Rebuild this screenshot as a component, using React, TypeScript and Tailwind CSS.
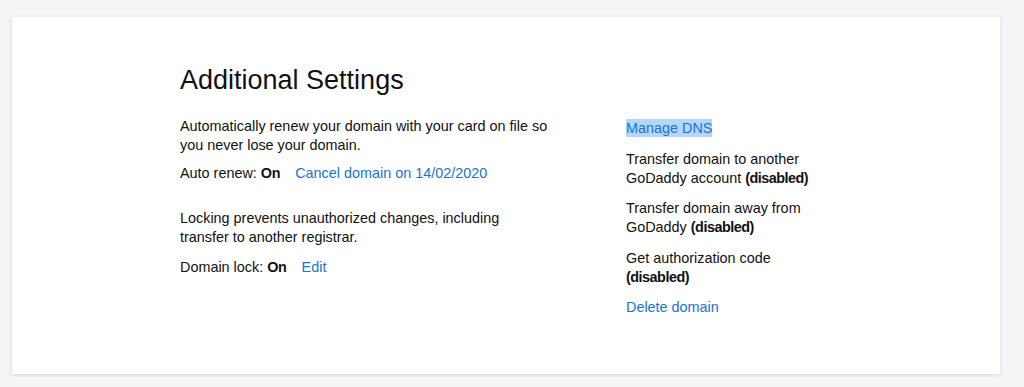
export default function App() {
  return (
    <div className="h-[387px] w-[1024px] bg-[#f4f5f7] pt-[17px] pl-[12px] font-['Liberation_Sans',Arial,sans-serif] text-[14.4px] leading-[19px] text-[#111111]">
      <div className="h-[357px] w-[988px] bg-white pt-[45px] pl-[168px] shadow-[0_1px_4px_rgba(0,0,0,0.12)]">
        <div className="flex">
          <div className="w-[446px]">
            <h1 className="text-[27px] leading-[36px] font-normal text-[#111111]">Additional Settings</h1>
            <p className="mt-[19px] w-[385px]">
              Automatically renew your domain with your card on file so you never lose your domain.
            </p>
            <div className="mt-[9px] flex gap-[15px]">
              <span>
                Auto renew: <b className="font-bold tracking-[-0.3px]">On</b>
              </span>
              <a className="text-[#1a73d0]">Cancel domain on 14/02/2020</a>
            </div>
            <p className="mt-[26px] w-[345px]">
              Locking prevents unauthorized changes, including transfer to another registrar.
            </p>
            <div className="mt-[11px] flex gap-[15px]">
              <span>
                Domain lock: <b className="font-bold tracking-[-0.3px]">On</b>
              </span>
              <a className="text-[#1a73d0]">Edit</a>
            </div>
          </div>
          <div className="mt-[57px] flex w-[200px] flex-col gap-[11.5px]">
            <div>
              <a className="bg-[#b4d6fb] py-[1px] text-[#1a73d0]">Manage DNS</a>
            </div>
            <p>
              Transfer domain to another GoDaddy account{" "}
              <b className="font-bold tracking-[-0.5px]">(disabled)</b>
            </p>
            <p>
              Transfer domain away from GoDaddy <b className="font-bold tracking-[-0.5px]">(disabled)</b>
            </p>
            <p>
              Get authorization code <b className="font-bold tracking-[-0.5px]">(disabled)</b>
            </p>
            <a className="text-[#1a73d0]">Delete domain</a>
          </div>
        </div>
      </div>
    </div>
  );
}
